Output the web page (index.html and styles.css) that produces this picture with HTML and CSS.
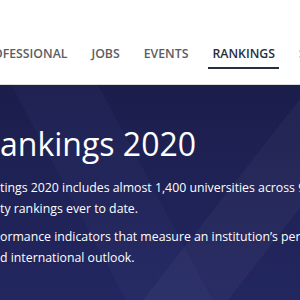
FILE: index.html
```html
<!DOCTYPE html>
<html lang="en">
<head>
  <meta charset="UTF-8" />
  <meta name="viewport" content="width=device-width, initial-scale=1" />
  <title>World University Rankings 2020</title>
  <link rel="stylesheet" href="styles.css">
</head>
<body>
  <!-- Top navigation -->
  <header class="topbar">
    <nav class="nav">
      <a class="nav-link" href="#">OFESSIONAL</a>
      <a class="nav-link" href="#">JOBS</a>
      <a class="nav-link" href="#">EVENTS</a>
      <a class="nav-link active" href="#">RANKINGS</a>
      <a class="nav-link" href="#">STUDENT</a>
    </nav>
  </header>

  <!-- Hero -->
  <section class="hero">
    <h1 class="hero-title">ankings 2020</h1>
    <p class="hero-text">
      <span class="line">tings 2020 includes almost 1,400 universities across 92 countries,</span>
      <span class="line">ty rankings ever to date.</span>
    </p>
    <p class="hero-text">
      <span class="line">ormance indicators that measure an institution’s performance across</span>
      <span class="line">d international outlook.</span>
    </p>
  </section>
</body>
</html>
```

FILE: styles.css
```css
body {
  margin: 0;
  height: 100vh;
  font-family: 'Open Sans', 'Noto Sans', sans-serif;
  background: #242866;
  overflow: hidden;
}

/* --- Top bar --- */
.topbar {
  background: #fff;
  height: 84px;
  border-bottom: 1px solid #dcdcdc;
  display: flex;
  align-items: flex-end;
}
.nav {
  display: flex;
  gap: 16px;
  margin-left: -11px;
  padding-bottom: 15px;
  white-space: nowrap;
}
.nav-link {
  font-size: 12.3px;
  font-weight: 600;
  line-height: 17px;
  color: #5b5d62;
  text-decoration: none;
  padding: 0 4px 5px;
  border-bottom: 2px solid transparent;
}
.nav-link.active {
  color: #262f3d;
  border-bottom-color: #262f3d;
}

/* --- Hero --- */
.hero {
  height: 100%;
  padding: 40px 0 0;
  color: #fff;
  white-space: nowrap;
  background:
    linear-gradient(128deg, transparent 55%, rgba(255,255,255,0.03) 55%, rgba(255,255,255,0.03) 70%, transparent 70%),
    linear-gradient(62deg, transparent 40%, rgba(120,130,220,0.045) 40%, rgba(120,130,220,0.045) 58%, transparent 58%),
    linear-gradient(180deg, #1b1e4b 0%, #21245a 45%, #272c6b 100%);
}
.hero-title {
  margin: 0 0 16px;
  font-size: 32px;
  font-weight: 400;
  line-height: 37px;
}
.hero-text {
  margin: 0 0 8px;
  font-size: 12.3px;
  line-height: 20.5px;
}
.line { display: block; }
```
